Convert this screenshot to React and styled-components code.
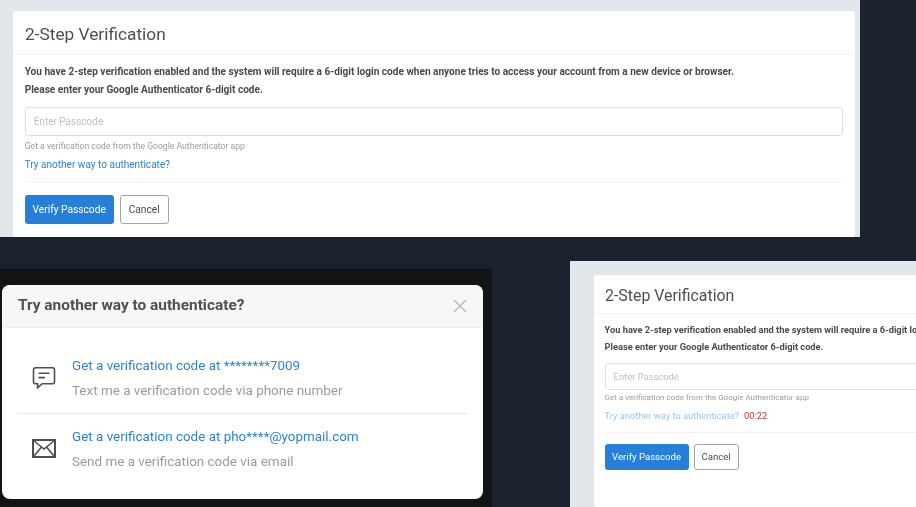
import styled, { createGlobalStyle } from "styled-components";

const GlobalStyle = createGlobalStyle`
  html, body {
    margin: 0;
    padding: 0;
    background: #1a222f;
    font-family: Roboto, "Liberation Sans", sans-serif;
  }
`;

const ChatIcon = () => (
  <svg width="24" height="24" viewBox="0 0 24 24" fill="none" stroke="#4d4f52" strokeWidth="1.6">
    <path d="M3.5 1.8h17a2 2 0 0 1 2 2v12a2 2 0 0 1-2 2H10l-4.6 4.2.4-4.2H3.5a2 2 0 0 1-2-2v-12a2 2 0 0 1 2-2z" strokeLinejoin="round" />
    <path d="M6.5 7.3h11M6.5 11.6h6.5" />
  </svg>
);

const MailIcon = () => (
  <svg width="24" height="20" viewBox="0 0 24 20" fill="none" stroke="#4d4f52">
    <rect x="1" y="1" width="22" height="17" strokeWidth="2" />
    <path d="M1.5 1.5 12 10 22.5 1.5M1.5 17.5 9.5 8M22.5 17.5 14.5 8" strokeWidth="1.6" />
  </svg>
);

const CloseIcon = () => (
  <svg width="14" height="14" viewBox="0 0 14 14" stroke="#bdbdbd" strokeWidth="1.6">
    <path d="M1 1 13 13M13 1 1 13" />
  </svg>
);

const VerifyPanel = ({ small, timer }) => (
  <Shot $small={small}>
    <Card $small={small}>
      <CardHeader $small={small}>2-Step Verification</CardHeader>
      <CardBody $small={small}>
        <Intro $small={small}>
          You have 2-step verification enabled and the system will require a 6-digit login code when anyone tries to access your account from a new device or browser.
        </Intro>
        <Intro $small={small}>Please enter your Google Authenticator 6-digit code.</Intro>
        <PasscodeInput $small={small}>Enter Passcode</PasscodeInput>
        <Hint $small={small}>Get a verification code from the Google Authenticator app</Hint>
        <LinkRow $small={small}>
          <TryLink $small={small}>Try another way to authenticate?</TryLink>
          {timer && <Timer>{timer}</Timer>}
        </LinkRow>
        <Divider $small={small} />
        <Buttons $small={small}>
          <VerifyButton $small={small}>Verify Passcode</VerifyButton>
          <CancelButton $small={small}>Cancel</CancelButton>
        </Buttons>
      </CardBody>
    </Card>
  </Shot>
);

const options = [
  {
    icon: <ChatIcon />,
    title: "Get a verification code at ********7009",
    text: "Text me a verification code via phone number",
  },
  {
    icon: <MailIcon />,
    title: "Get a verification code at pho****@yopmail.com",
    text: "Send me a verification code via email",
  },
];

const App = () => {
  return (
    <Page>
      <GlobalStyle />
      <VerifyPanel />
      <BottomRow>
        <Backdrop>
          <Modal>
            <ModalHeader>
              <ModalTitle>Try another way to authenticate?</ModalTitle>
              <CloseIcon />
            </ModalHeader>
            <OptionList>
              {options.map((option) => (
                <Option key={option.title}>
                  <OptionIcon>{option.icon}</OptionIcon>
                  <div>
                    <OptionTitle>{option.title}</OptionTitle>
                    <OptionText>{option.text}</OptionText>
                  </div>
                </Option>
              ))}
            </OptionList>
          </Modal>
        </Backdrop>
        <VerifyPanel small timer="00:22" />
      </BottomRow>
    </Page>
  );
};

export default App;

const Page = styled.div`
  width: 916px;
  height: 507px;
  overflow: hidden;
  display: flex;
  flex-direction: column;
  background: #1a222f;
  filter: blur(0.45px);
`;

const Shot = styled.section`
  box-sizing: border-box;
  flex: none;
  overflow: hidden;
  background: #e2e7ec;
  width: ${(p) => (p.$small ? "346px" : "860px")};
  height: ${(p) => (p.$small ? "246px" : "237px")};
  padding: ${(p) => (p.$small ? "14px 0 0 24px" : "11px 5px 0 13px")};
`;

const Card = styled.div`
  box-sizing: border-box;
  background: #fff;
  border-radius: 4px;
  height: 100%;
  width: ${(p) => (p.$small ? "760px" : "auto")};
`;

const CardHeader = styled.h2`
  box-sizing: border-box;
  margin: 0;
  border-bottom: 1px solid #f0f1f3;
  color: #4b4f54;
  font-weight: 400;
  font-size: ${(p) => (p.$small ? "15.9px" : "17.3px")};
  height: ${(p) => (p.$small ? "39px" : "44px")};
  line-height: ${(p) => (p.$small ? "42px" : "46px")};
  padding-left: ${(p) => (p.$small ? "11px" : "12px")};
`;

const CardBody = styled.div`
  padding: ${(p) => (p.$small ? "7px 0 0 10.6px" : "8px 12px 0 11.7px")};
`;

const Intro = styled.p`
  margin: 0;
  color: #4a4a4a;
  font-weight: 700;
  white-space: nowrap;
  font-size: ${(p) => (p.$small ? "9.25px" : "10.08px")};
  line-height: ${(p) => (p.$small ? "17px" : "18px")};
`;

const PasscodeInput = styled.div`
  box-sizing: border-box;
  border: 1px solid #dcdee0;
  border-radius: 3px;
  color: #bcbec0;
  font-size: ${(p) => (p.$small ? "9.4px" : "10px")};
  height: ${(p) => (p.$small ? "27px" : "29px")};
  line-height: ${(p) => (p.$small ? "25px" : "28px")};
  margin-top: 8px;
  padding-left: 8px;
`;

const Hint = styled.div`
  color: #9a9c9e;
  font-size: ${(p) => (p.$small ? "8px" : "8.65px")};
  line-height: 10px;
  margin-top: ${(p) => (p.$small ? "3px" : "5px")};
`;

const LinkRow = styled.div`
  display: flex;
  gap: 5px;
  font-size: ${(p) => (p.$small ? "9.3px" : "10.05px")};
  line-height: 12px;
  margin-top: ${(p) => (p.$small ? "7px" : "8px")};
`;

const TryLink = styled.span`
  color: ${(p) => (p.$small ? "#9ac5f0" : "#2b83d6")};
`;

const Timer = styled.span`
  color: #c0392f;
`;

const Divider = styled.hr`
  border: 0;
  border-top: 1px solid #f1f2f3;
  margin: ${(p) => (p.$small ? "10px 0 11px" : "11px 0 12px")};
`;

const Buttons = styled.div`
  display: flex;
  gap: ${(p) => (p.$small ? "5px" : "6px")};
`;

const VerifyButton = styled.div`
  box-sizing: border-box;
  background: #2680d9;
  border-radius: 3px;
  color: #fff;
  text-align: center;
  font-size: ${(p) => (p.$small ? "9.6px" : "10.2px")};
  width: ${(p) => (p.$small ? "84px" : "89px")};
  height: ${(p) => (p.$small ? "26px" : "29px")};
  line-height: ${(p) => (p.$small ? "26px" : "29px")};
`;

const CancelButton = styled.div`
  box-sizing: border-box;
  background: #fff;
  border: 1.3px solid #a5a5a5;
  border-radius: 3px;
  color: #4c4c4c;
  text-align: center;
  font-size: ${(p) => (p.$small ? "9.6px" : "10.2px")};
  width: ${(p) => (p.$small ? "45px" : "49px")};
  height: ${(p) => (p.$small ? "26px" : "29px")};
  line-height: ${(p) => (p.$small ? "24px" : "27px")};
`;

const BottomRow = styled.div`
  flex: 1;
  display: flex;
  justify-content: space-between;
  align-items: flex-end;
`;

const Backdrop = styled.div`
  box-sizing: border-box;
  width: 492px;
  height: 238px;
  padding: 16px 0 0 2px;
  background: #131416;
`;

const Modal = styled.div`
  box-sizing: border-box;
  width: 481px;
  height: 214px;
  background: #fff;
  border-radius: 8px;
  overflow: hidden;
`;

const ModalHeader = styled.header`
  box-sizing: border-box;
  display: flex;
  justify-content: space-between;
  align-items: center;
  height: 43px;
  padding: 0 16px 0 16px;
  background: #f7f7f7;
  border-bottom: 1px solid #eeeeee;
`;

const ModalTitle = styled.h3`
  margin: 0 0 2px;
  color: #505050;
  font-size: 15.4px;
  font-weight: 700;
`;

const OptionList = styled.div`
  padding: 15px 15px 0 16px;
`;

const Option = styled.div`
  display: flex;
  align-items: center;
  height: 70px;
  padding-left: 14px;
  & + & {
    border-top: 1px solid #e9e9e9;
    padding-bottom: 1px;
  }
`;

const OptionIcon = styled.div`
  display: flex;
  width: 40px;
  flex: none;
`;

const OptionTitle = styled.div`
  color: #2b83d6;
  font-size: 13.45px;
  line-height: 16px;
`;

const OptionText = styled.div`
  color: #999b9d;
  font-size: 13.45px;
  line-height: 16px;
  margin-top: 9px;
`;
